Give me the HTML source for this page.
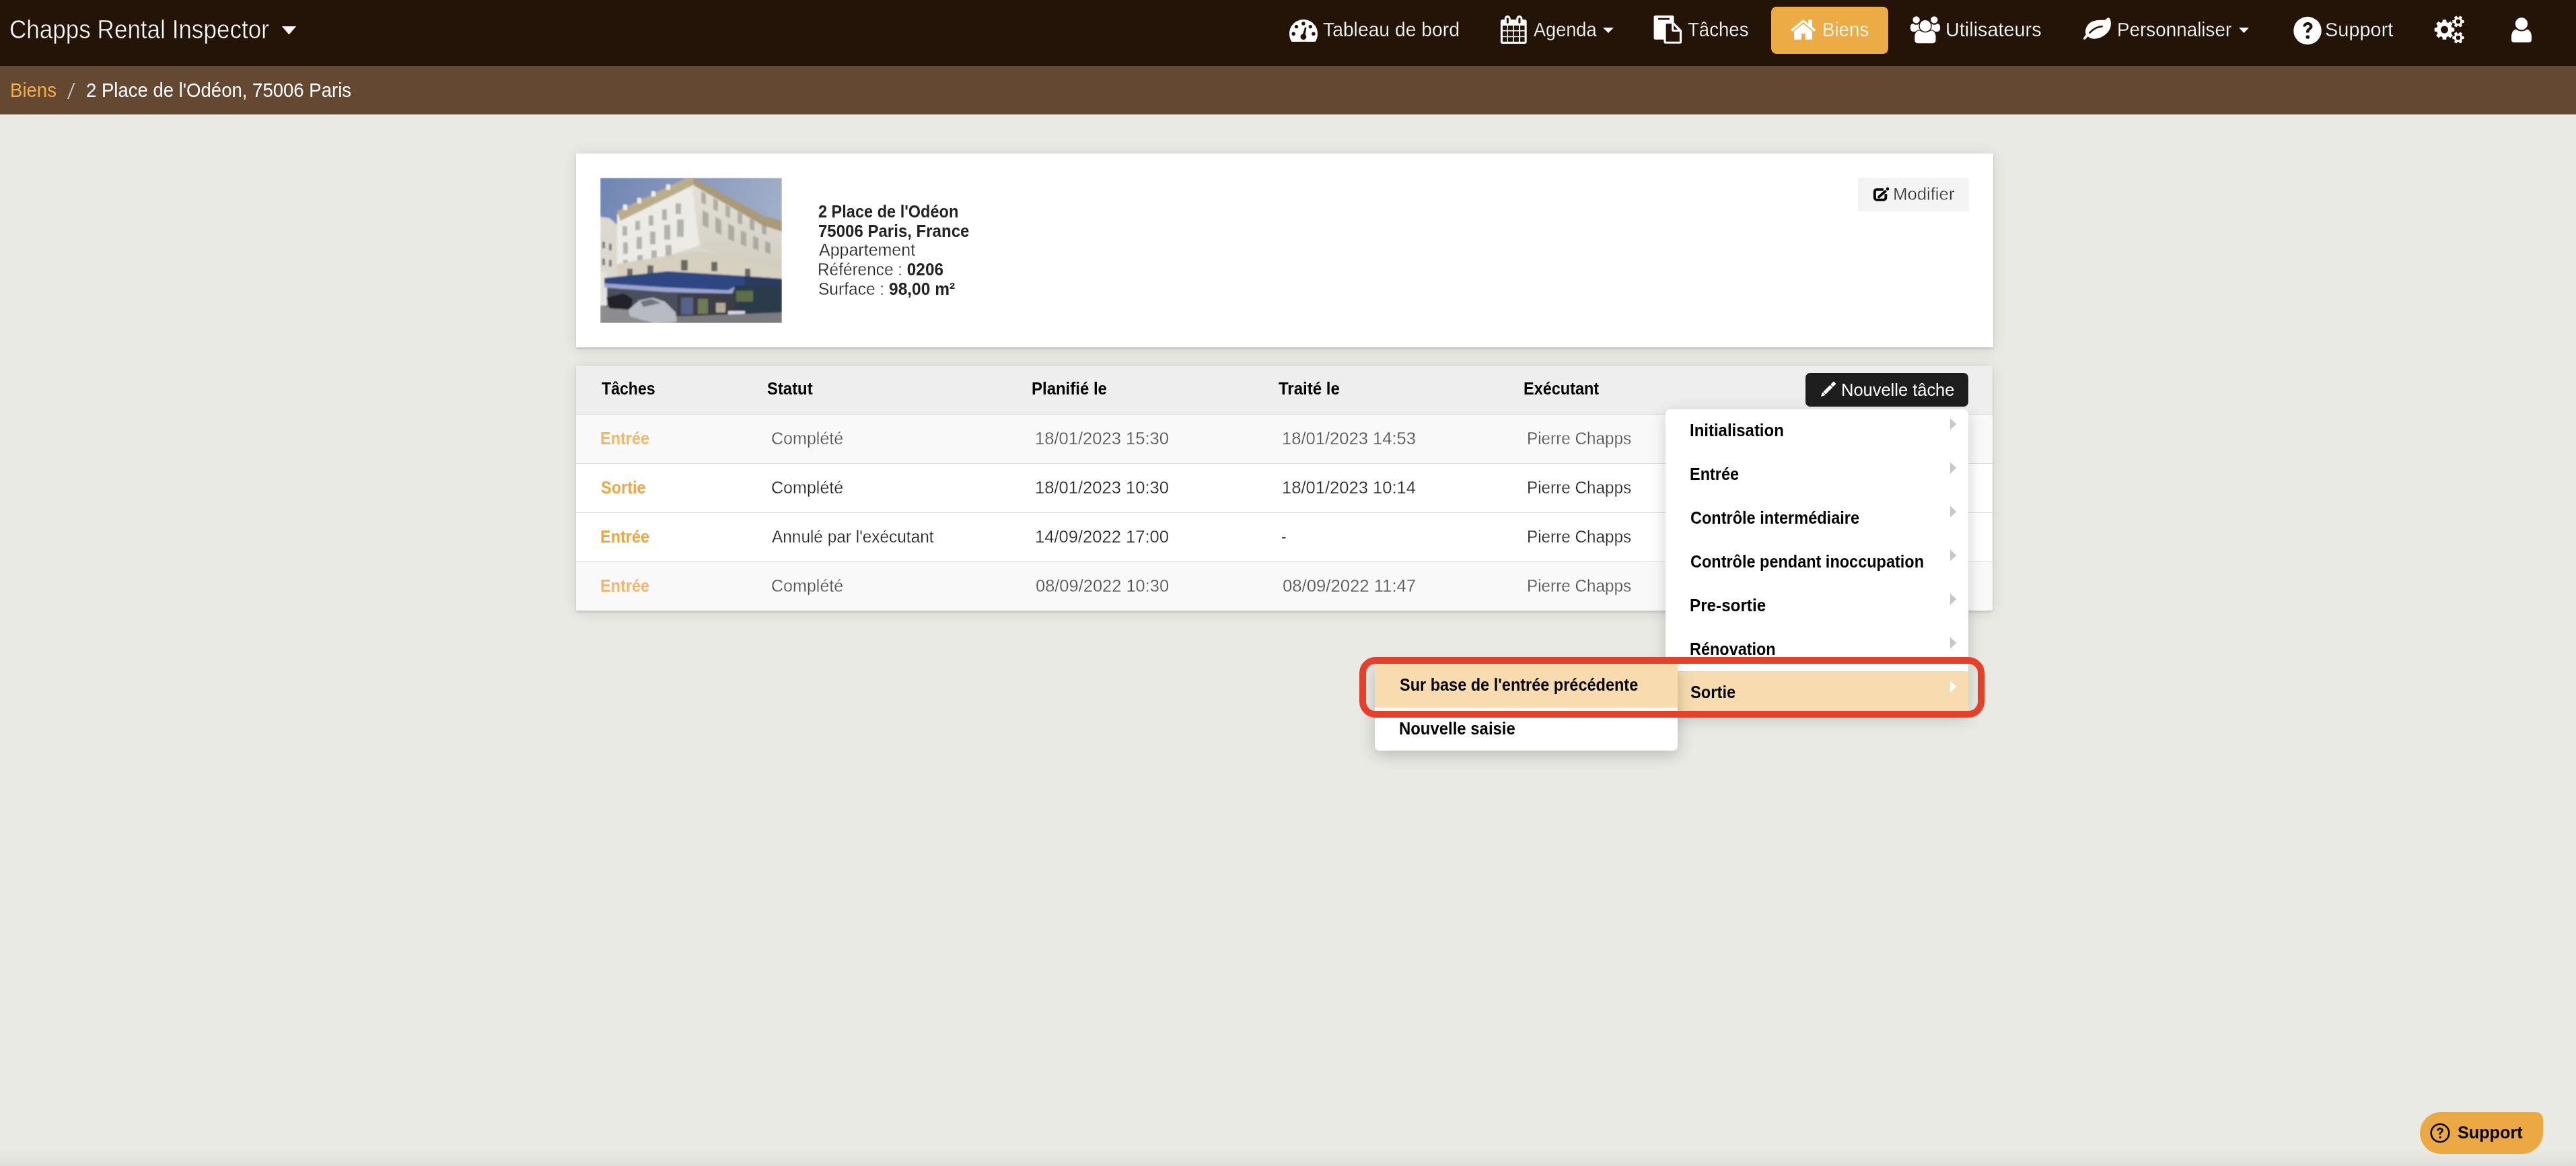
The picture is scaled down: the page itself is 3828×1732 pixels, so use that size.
<!DOCTYPE html>
<html><head><meta charset="utf-8"><style>
html,body{margin:0;padding:0}
body{width:3828px;height:1732px;overflow:hidden;position:relative;background:#eaeae5;font-family:"Liberation Sans",sans-serif}
.t{position:absolute;white-space:nowrap;transform-origin:0 0;font-family:"Liberation Sans",sans-serif}
.t b{-webkit-text-stroke:0}
svg{display:block}
</style></head><body>
<div style="position:absolute;left:0px;top:0px;width:3828px;height:98px;background:#241307"></div>
<div style="position:absolute;left:0px;top:98px;width:3828px;height:72px;background:#654832"></div>
<div style="position:absolute;left:0px;top:1707px;width:3828px;height:25px;background:linear-gradient(rgba(0,0,0,0),rgba(0,0,0,0.05))"></div>
<div style="position:absolute;left:2632px;top:10px;width:174px;height:70px;background:#ecab45;border-radius:8px"></div>
<svg style="position:absolute;left:419px;top:39px;" width="21" height="12" viewBox="0 0 21 12"><path d="M0.3 0.3H20.7L10.5 12Z" fill="#fff" stroke="#fff" stroke-width="0.6" stroke-linejoin="round"/></svg>
<svg style="position:absolute;left:2382px;top:41px;" width="16" height="8" viewBox="0 0 16 8"><path d="M0 0H16L8 8Z" fill="#fff"/></svg>
<svg style="position:absolute;left:3327px;top:41px;" width="15" height="8" viewBox="0 0 15 8"><path d="M0 0H15L7.5 8Z" fill="#fff"/></svg>
<svg style="position:absolute;left:1916px;top:29px;" width="42" height="33" viewBox="0 0 42 33"><path d="M21 0C9.4 0 0 9.4 0 21c0 4 1 8 3 11.5L4 33H38l1-0.5C41 29 42 25 42 21 42 9.4 32.6 0 21 0Z" fill="#fff"/><g fill="#241307"><circle cx="20.9" cy="6" r="2.7"/><circle cx="10.5" cy="10.6" r="2.7"/><circle cx="31.3" cy="10.6" r="2.7"/><circle cx="6.2" cy="21.2" r="2.7"/><circle cx="35.9" cy="21.2" r="2.7"/><circle cx="20.9" cy="25.6" r="4.4"/><path d="M18.8 25L23.2 11.2l2.3 0.7L23 26Z"/></g></svg>
<svg style="position:absolute;left:2229px;top:23px;" width="41" height="43" viewBox="0 0 41 43"><rect x="0.9" y="5.9" width="38.8" height="36.1" rx="3" fill="#fff"/><rect x="6.7" y="0.1" width="9.1" height="12" rx="4.5" fill="#fff"/><rect x="24.3" y="0.1" width="9.1" height="12" rx="4.5" fill="#fff"/><rect x="9.8" y="3.3" width="3.1" height="8.4" rx="1.5" fill="#241307"/><rect x="27.4" y="3.3" width="3.1" height="8.4" rx="1.5" fill="#241307"/><g fill="#241307"><rect x="4" y="15" width="6.7" height="6.8"/><rect x="4" y="23.5" width="6.7" height="7.2"/><rect x="4" y="32.2" width="6.7" height="6.7"/><rect x="12" y="15" width="7.4" height="6.8"/><rect x="12" y="23.5" width="7.4" height="7.2"/><rect x="12" y="32.2" width="7.4" height="6.7"/><rect x="21" y="15" width="7.1" height="6.8"/><rect x="21" y="23.5" width="7.1" height="7.2"/><rect x="21" y="32.2" width="7.1" height="6.7"/><rect x="30.1" y="15" width="6.5" height="6.8"/><rect x="30.1" y="23.5" width="6.5" height="7.2"/><rect x="30.1" y="32.2" width="6.5" height="6.7"/></g></svg>
<svg style="position:absolute;left:2457px;top:23px;" width="43" height="43" viewBox="0 0 43 43"><rect x="0.6" y="0.1" width="29.9" height="35.7" rx="2.5" fill="#fff"/><rect x="6.8" y="3.7" width="17.4" height="2.7" rx="1.3" fill="#241307"/><path d="M15.5 10.4H30.5L42.1 22V39.6a2.2 2.2 0 0 1-2.2 2.2H17.7a2.2 2.2 0 0 1-2.2-2.2Z" fill="#fff"/><path d="M18.6 12.2H27.1V21.5a2.5 2.5 0 0 0 2.5 2.5H38.9V38.7H18.6Z" fill="#241307"/><path d="M30.2 14.6V20.9H36.3Z" fill="#241307"/></svg>
<svg style="position:absolute;left:2660px;top:28px;" width="39" height="32" viewBox="0 0 39 32"><path d="M0.85 16.3L19.7 1 27.1 7V1.2H32.9V11.7L38.4 16.3 36.1 18.9 19.7 5.1 3.5 18.9Z" fill="#fff"/><path d="M19.7 7.2L32.9 18.2V29.8Q32.9 30.8 31.9 30.8H22.7V22.1H16.9V30.8H7.1Q6.1 30.8 6.1 29.8V18.2Z" fill="#fff"/></svg>
<svg style="position:absolute;left:2838px;top:22px;" width="46" height="44" viewBox="0 0 46 44"><path d="M0.9 18C0.9 15 2.5 12.9 5 12.9 7 14.3 8.2 14.8 9.6 14.8 11 14.8 12.5 14.3 14 13H20V25H5.5C2.8 25 0.9 23.3 0.9 20.5Z" fill="#fff"/><path d="M45.1 18C45.1 15 43.5 12.9 41 12.9 39 14.3 37.8 14.8 36.4 14.8 35 14.8 33.5 14.3 32 13H26V25H40.5C43.2 25 45.1 23.3 45.1 20.5Z" fill="#fff"/><circle cx="9.6" cy="7.4" r="5.8" fill="#fff" stroke="#241307" stroke-width="1.2"/><circle cx="36.3" cy="7.4" r="5.8" fill="#fff" stroke="#241307" stroke-width="1.2"/><path d="M15 22.7C17 24.3 20 25.5 23 25.5 26 25.5 29 24.3 31 22.7 36 22.7 39.2 26.5 39.2 31.5V38A5 5 0 0 1 34.2 43H11.7A5 5 0 0 1 6.7 38V31.5C6.7 26.5 10 22.7 15 22.7Z" fill="#fff" stroke="#241307" stroke-width="1.3"/><circle cx="23" cy="16.5" r="9.1" fill="#fff" stroke="#241307" stroke-width="1.4"/></svg>
<svg style="position:absolute;left:3095px;top:26px;" width="43" height="34" viewBox="0 0 43 34"><path d="M37.9 0.2C40.5 0.2 42 4 41.9 9.4 41.8 18 36 27 22 31 14 33 10 30 7.7 28.2L3.8 32.3A1.7 1.7 0 0 1 1.4 29.9L4.8 25.3C3 21 4 15 8.5 10 14 4 22 3.5 32.8 3.7 35 3.2 36 0.2 37.9 0.2Z" fill="#fff"/><path d="M10.4 22.6C14 19 20 13.5 28.6 13.3" stroke="#241307" stroke-width="2.6" fill="none" stroke-linecap="round"/></svg>
<svg style="position:absolute;left:3408px;top:24px;" width="42" height="43" viewBox="0 0 42 43"><circle cx="21" cy="21.5" r="20.7" fill="#fff"/><path d="M14.5 15.5c0-4 3-6.5 7-6.5s7 2.6 7 6.2c0 4.5-5 4.8-5 8.3v1h-4.5v-1.4c0-4.8 5-5 5-7.8 0-1.5-1.1-2.5-2.6-2.5-1.6 0-2.6 1.2-2.6 2.7Z" fill="#241307"/><circle cx="21.3" cy="31" r="2.8" fill="#241307"/></svg>
<svg style="position:absolute;left:3616px;top:23px;" width="48" height="43" viewBox="0 0 48 43"><polygon points="27.55,17.81 31.28,18.42 31.28,23.58 27.55,24.19 26.57,26.56 28.77,29.63 25.13,33.27 22.06,31.07 19.69,32.05 19.08,35.78 13.92,35.78 13.31,32.05 10.94,31.07 7.87,33.27 4.23,29.63 6.43,26.56 5.45,24.19 1.72,23.58 1.72,18.42 5.45,17.81 6.43,15.44 4.23,12.37 7.87,8.73 10.94,10.93 13.31,9.95 13.92,6.22 19.08,6.22 19.69,9.95 22.06,10.93 25.13,8.73 28.77,12.37 26.57,15.44" fill="#fff"/><circle cx="16.5" cy="21" r="5.5" fill="#241307"/><polygon points="42.96,6.66 45.57,6.99 45.57,11.01 42.96,11.34 42.01,12.99 43.02,15.41 39.54,17.42 37.95,15.33 36.05,15.33 34.46,17.42 30.98,15.41 31.99,12.99 31.04,11.34 28.43,11.01 28.43,6.99 31.04,6.66 31.99,5.01 30.98,2.59 34.46,0.58 36.05,2.67 37.95,2.67 39.54,0.58 43.02,2.59 42.01,5.01" fill="#fff"/><circle cx="37" cy="9" r="3.2" fill="#241307"/><polygon points="42.96,30.66 45.57,30.99 45.57,35.01 42.96,35.34 42.01,36.99 43.02,39.41 39.54,41.42 37.95,39.33 36.05,39.33 34.46,41.42 30.98,39.41 31.99,36.99 31.04,35.34 28.43,35.01 28.43,30.99 31.04,30.66 31.99,29.01 30.98,26.59 34.46,24.58 36.05,26.67 37.95,26.67 39.54,24.58 43.02,26.59 42.01,29.01" fill="#fff"/><circle cx="37" cy="33" r="3.2" fill="#241307"/></svg>
<svg style="position:absolute;left:3731px;top:26px;" width="32" height="37" viewBox="0 0 32 37"><circle cx="16" cy="9.2" r="9.2" fill="#fff"/><path d="M8 17.5c2 2 5 3 8 3s6-1 8-3c4.5 1 7 5 7 12v3.5a4 4 0 0 1-4 4H5a4 4 0 0 1-4-4V29.5c0-7 2.5-11 7-12Z" fill="#fff"/></svg>
<svg style="position:absolute;left:100px;top:123px;" width="12" height="24" viewBox="0 0 12 24"><path d="M9.5 0h2L2 24H0Z" fill="#cfcfcf"/></svg>
<div style="position:absolute;left:856px;top:228px;width:2106px;height:288px;background:#fff;box-shadow:0 2px 3px rgba(0,0,0,0.15),0 2px 20px rgba(0,0,0,0.11)"></div>
<div style="position:absolute;left:892px;top:264px;width:270px;height:216px;overflow:hidden"><svg style="position:absolute;left:0px;top:0px;" width="270" height="216" viewBox="0 0 270 216"><filter id="pb" x="0" y="0" width="1" height="1"><feGaussianBlur stdDeviation="0.9" edgeMode="duplicate"/></filter><g filter="url(#pb)"><defs><linearGradient id="sky" x1="0" y1="0" x2="1" y2="0.3"><stop offset="0" stop-color="#6f85b3"/><stop offset="1" stop-color="#a3b0c9"/></linearGradient><linearGradient id="rf" x1="0" y1="0" x2="0" y2="1"><stop offset="0" stop-color="#e6e3da"/><stop offset="1" stop-color="#cfcabd"/></linearGradient></defs><rect width="270" height="216" fill="url(#sky)"/><path d="M25 60L135 10 270 75V160H25Z" fill="#dcd8cc"/><path d="M0 58L14 60 25 70V185H0Z" fill="#dcd8d0"/><g fill="#7d7a72"><rect x="3" y="95" width="4" height="10"/><rect x="13" y="98" width="4" height="10"/><rect x="3" y="120" width="4" height="10"/><rect x="13" y="122" width="4" height="10"/></g><path d="M25 54L135 0 148 100 25 140Z" fill="#ecebe5"/><path d="M135 0L242 58 270 68 270 150 148 104Z" fill="url(#rf)"/><path d="M25 50L133 -2 140 10 30 64Z" fill="#b9ad8c"/><path d="M135 -2L242 56 270 64 270 80 240 70 140 12Z" fill="#a99b7a"/><g fill="#f1efe8"><rect x="34" y="40" width="6" height="8"/><rect x="55" y="30" width="6" height="8"/><rect x="76" y="20" width="6" height="8"/><rect x="98" y="10" width="6" height="8"/></g><g fill="#8e8f88" opacity="0.6"><path d="M33 72h7v14h-7Z M52 64h7v14h-7Z M72 56h7v15h-7Z M92 47h7v16h-7Z M112 38h8v16h-8Z"/><path d="M34 96h7v17h-7Z M54 88h8v18h-8Z M74 80h8v19h-8Z M95 70h9v22h-9Z M114 62h10v26h-10Z"/><path d="M34 122h7v14h-7Z M55 115h8v16h-8Z M76 108h8v17h-8Z M97 100h9v19h-9Z"/><path d="M150 20l7 4v16l-7-3Z M168 30l7 4v16l-7-3Z M186 40l7 4v16l-7-3Z M204 50l7 4v16l-7-3Z M222 60l7 4v15l-7-3Z M240 68l7 3v14l-7-2Z"/><path d="M152 48l9 5v22l-9-4Z M171 58l9 5v22l-9-4Z M190 68l9 5v22l-9-4Z M209 78l8 4v20l-8-3Z M227 86l8 4v18l-8-3Z M245 94l8 3v16l-8-2Z"/></g><path d="M25 128L148 108 270 136V152L148 142 25 152Z" fill="#d6d0c1"/><g fill="#6b6a63"><path d="M40 135h8v12h-8Z M70 130h9v14h-9Z M120 122h10v16h-10Z M165 125h9v14h-9Z M215 135h8v12h-8Z"/></g><path d="M0 150H270V216H0Z" fill="#4a4f5c"/><path d="M0 140L10 140 10 190 0 190Z" fill="#e4e2dc"/><path d="M6 149L100 139 214 146 214 160 190 170 100 166 6 160Z" fill="#2f4683"/><path d="M6 157L100 163 190 167 200 162 196 172 100 170 6 163Z" fill="#9aa5cf"/><path d="M214 146L270 150V160L214 160Z" fill="#2b3a62"/><path d="M115 172H200V205H115Z" fill="#3d3e45"/><path d="M120 178h18v25h-18Z" fill="#55648a"/><path d="M145 180h15v22h-15Z" fill="#6f7a55"/><path d="M172 186h14v14h-14Z" fill="#b7aa95"/><path d="M200 160H270V216H200Z" fill="#2c3a48"/><path d="M202 168h25v16h-25Z" fill="#5f6e4a"/><path d="M190 198h25v12h-25Z" fill="#d8d8e0"/><path d="M0 190L40 196 115 216H0Z" fill="#8d8d8f"/><path d="M112 206L270 200V216H112Z" fill="#7c7c80"/><path d="M9 178L35 172 48 180 46 196 14 194Z" fill="#22242c"/><path d="M42 196L58 182 78 178 96 184 112 200 114 214 80 216 44 206Z" fill="#b8bbc1"/><path d="M60 184L76 180 90 186 64 192Z" fill="#70757e"/></g></svg></div>
<div style="position:absolute;left:2761px;top:264px;width:165px;height:50px;background:#f4f4f4"></div>
<svg style="position:absolute;left:2781px;top:275px;" width="30" height="27" viewBox="0 0 30 27"><path d="M17.8 6.45H8A3.2 3.2 0 0 0 4.85 9.6V18.7A3.2 3.2 0 0 0 8 21.85H18.2A3.2 3.2 0 0 0 21.35 18.7V13.3" fill="none" stroke="#000" stroke-width="3.9"/><path d="M11.2 17.4L20.5 9.3" stroke="#000" stroke-width="3.8" stroke-linecap="round"/><circle cx="24" cy="5.6" r="2.3" fill="#000"/></svg>
<div style="position:absolute;left:856px;top:544px;width:2105px;height:363px;background:#fff;box-shadow:0 2px 3px rgba(0,0,0,0.15),0 2px 20px rgba(0,0,0,0.11)"></div>
<div style="position:absolute;left:856px;top:544px;width:2105px;height:71px;background:#eeeeee;border-bottom:1px solid #dedede"></div>
<div style="position:absolute;left:856px;top:616px;width:2105px;height:72px;background:#f9f9f9;border-bottom:1px solid #dedede"></div>
<div style="position:absolute;left:856px;top:689px;width:2105px;height:72px;background:#fff;border-bottom:1px solid #dedede"></div>
<div style="position:absolute;left:856px;top:762px;width:2105px;height:72px;background:#fff;border-bottom:1px solid #dedede"></div>
<div style="position:absolute;left:856px;top:835px;width:2105px;height:72px;background:#f9f9f9"></div>
<div style="position:absolute;left:2683px;top:554px;width:242px;height:50px;background:#1e1e1e;border-radius:7px"></div>
<svg style="position:absolute;left:2704px;top:566px;" width="25" height="25" viewBox="0 0 25 25"><g transform="translate(12.5 12.5) rotate(-45)" fill="#fff"><path d="M-15 0L-9.6 -2.6H-8.4V2.6H-9.6Z"/><rect x="-7.6" y="-2.6" width="14.6" height="5.2"/><rect x="7.8" y="-2.6" width="6.6" height="5.2" rx="1.2"/></g></svg>
<div style="position:absolute;left:2475px;top:608px;width:450px;height:454px;background:#fff;border-radius:7px;box-shadow:0 6px 24px rgba(0,0,0,0.18);overflow:hidden"></div>
<div style="position:absolute;left:2475px;top:997px;width:450px;height:65px;background:#f8dcb0;border-radius:0 0 7px 7px"></div>
<svg style="position:absolute;left:2898px;top:621px;" width="10" height="18" viewBox="0 0 10 18"><path d="M0 0.5L9.3 9 0 17.5Z" fill="#c8c8c8"/></svg>
<svg style="position:absolute;left:2898px;top:686px;" width="10" height="18" viewBox="0 0 10 18"><path d="M0 0.5L9.3 9 0 17.5Z" fill="#c8c8c8"/></svg>
<svg style="position:absolute;left:2898px;top:751px;" width="10" height="18" viewBox="0 0 10 18"><path d="M0 0.5L9.3 9 0 17.5Z" fill="#c8c8c8"/></svg>
<svg style="position:absolute;left:2898px;top:816px;" width="10" height="18" viewBox="0 0 10 18"><path d="M0 0.5L9.3 9 0 17.5Z" fill="#c8c8c8"/></svg>
<svg style="position:absolute;left:2898px;top:881px;" width="10" height="18" viewBox="0 0 10 18"><path d="M0 0.5L9.3 9 0 17.5Z" fill="#c8c8c8"/></svg>
<svg style="position:absolute;left:2898px;top:946px;" width="10" height="18" viewBox="0 0 10 18"><path d="M0 0.5L9.3 9 0 17.5Z" fill="#c8c8c8"/></svg>
<svg style="position:absolute;left:2898px;top:1011px;" width="10" height="18" viewBox="0 0 10 18"><path d="M0 0.5L9.3 9 0 17.5Z" fill="#fff"/></svg>
<div style="position:absolute;left:2043px;top:986px;width:450px;height:129px;background:#fff;border-radius:7px;box-shadow:0 6px 24px rgba(0,0,0,0.22);overflow:hidden"></div>
<div style="position:absolute;left:2043px;top:986px;width:450px;height:65px;background:#f8dcb0"></div>
<div style="position:absolute;left:3596px;top:1652px;width:183px;height:62px;background:#eca842;border-radius:31px 10px 31px 31px"></div>
<svg style="position:absolute;left:3611px;top:1668px;" width="30" height="30" viewBox="0 0 30 30"><circle cx="15" cy="15" r="13.3" fill="none" stroke="#000" stroke-width="2.6"/><path d="M10.5 11.5c0-2.8 2-4.5 4.6-4.5 2.7 0 4.6 1.7 4.6 4 0 3.2-3.6 3.3-3.6 5.8v0.7h-2.6v-0.9c0-3.3 3.5-3.4 3.5-5.4 0-1-0.8-1.8-1.9-1.8-1.2 0-2 0.9-2 2.1Z" fill="#000"/><circle cx="15.2" cy="21.5" r="1.7" fill="#000"/></svg>
<div class="t" style="left:14.41px;top:25.07px;font-size:38px;line-height:38px;font-weight:400;color:#ffffff;transform:scaleX(0.9225);-webkit-text-stroke:0.6px #241307">Chapps Rental Inspector</div>
<div class="t" style="left:1966.17px;top:28.26px;font-size:30.4px;line-height:30.4px;font-weight:400;color:#ffffff;transform:scaleX(0.9309);-webkit-text-stroke:0.3px #241307">Tableau de bord</div>
<div class="t" style="left:2278.75px;top:28.26px;font-size:30.4px;line-height:30.4px;font-weight:400;color:#ffffff;transform:scaleX(0.8929);-webkit-text-stroke:0.3px #241307">Agenda</div>
<div class="t" style="left:2508.09px;top:28.26px;font-size:30.4px;line-height:30.4px;font-weight:400;color:#ffffff;transform:scaleX(0.9082);-webkit-text-stroke:0.3px #241307">Tâches</div>
<div class="t" style="left:2707.68px;top:28.26px;font-size:30.4px;line-height:30.4px;font-weight:400;color:#ffffff;transform:scaleX(0.9110);-webkit-text-stroke:0.3px #ecab45">Biens</div>
<div class="t" style="left:2891.10px;top:28.26px;font-size:30.4px;line-height:30.4px;font-weight:400;color:#ffffff;transform:scaleX(0.9490);-webkit-text-stroke:0.3px #241307">Utilisateurs</div>
<div class="t" style="left:3145.67px;top:28.26px;font-size:30.4px;line-height:30.4px;font-weight:400;color:#ffffff;transform:scaleX(0.9158);-webkit-text-stroke:0.3px #241307">Personnaliser</div>
<div class="t" style="left:3455.05px;top:28.26px;font-size:30.4px;line-height:30.4px;font-weight:400;color:#ffffff;transform:scaleX(0.9524);-webkit-text-stroke:0.3px #241307">Support</div>
<div class="t" style="left:15.09px;top:118.26px;font-size:30.4px;line-height:30.4px;font-weight:400;color:#f2ad4c;transform:scaleX(0.9068);">Biens</div>
<div class="t" style="left:127.84px;top:118.26px;font-size:30.4px;line-height:30.4px;font-weight:400;color:#ffffff;transform:scaleX(0.9059);">2 Place de l'Odéon, 75006 Paris</div>
<div class="t" style="left:1215.61px;top:300.93px;font-size:26.3px;line-height:26.3px;font-weight:700;color:#222222;transform:scaleX(0.8948);">2 Place de l'Odéon</div>
<div class="t" style="left:1215.59px;top:329.73px;font-size:26.3px;line-height:26.3px;font-weight:700;color:#222222;transform:scaleX(0.9135);">75006 Paris, France</div>
<div class="t" style="left:1216.50px;top:358.33px;font-size:26.3px;line-height:26.3px;font-weight:400;color:#222222;transform:scaleX(0.9503);-webkit-text-stroke:0.3px #ffffff">Appartement</div>
<div class="t" style="left:1214.65px;top:387.13px;font-size:26.3px;line-height:26.3px;font-weight:400;color:#222222;transform:scaleX(0.9271);-webkit-text-stroke:0.3px #ffffff">Référence : <b>0206</b></div>
<div class="t" style="left:1215.57px;top:415.93px;font-size:26.3px;line-height:26.3px;font-weight:400;color:#222222;transform:scaleX(0.9329);-webkit-text-stroke:0.3px #ffffff">Surface : <b>98,00 m²</b></div>
<div class="t" style="left:2813.02px;top:274.78px;font-size:26px;line-height:26px;font-weight:400;color:#333333;transform:scaleX(0.9889);-webkit-text-stroke:0.3px #ffffff">Modifier</div>
<div class="t" style="left:893.75px;top:565.49px;font-size:25.4px;line-height:25.4px;font-weight:700;color:#000000;transform:scaleX(0.9109);">Tâches</div>
<div class="t" style="left:1140.31px;top:565.49px;font-size:25.4px;line-height:25.4px;font-weight:700;color:#000000;transform:scaleX(0.9401);">Statut</div>
<div class="t" style="left:1532.61px;top:565.49px;font-size:25.4px;line-height:25.4px;font-weight:700;color:#000000;transform:scaleX(0.9440);">Planifié le</div>
<div class="t" style="left:1900.25px;top:565.49px;font-size:25.4px;line-height:25.4px;font-weight:700;color:#000000;transform:scaleX(0.9474);">Traité le</div>
<div class="t" style="left:2264.40px;top:565.49px;font-size:25.4px;line-height:25.4px;font-weight:700;color:#000000;transform:scaleX(0.9244);">Exécutant</div>
<div class="t" style="left:2735.54px;top:565.98px;font-size:26px;line-height:26px;font-weight:400;color:#ffffff;transform:scaleX(0.9793);">Nouvelle tâche</div>
<div class="t" style="left:892.46px;top:637.81px;font-size:26.2px;line-height:26.2px;font-weight:700;color:#eeb86e;transform:scaleX(0.8956);">Entrée</div>
<div class="t" style="left:1145.79px;top:637.81px;font-size:26.2px;line-height:26.2px;font-weight:400;color:#4f4f4f;transform:scaleX(0.9568);-webkit-text-stroke:0.3px #f9f9f9">Complété</div>
<div class="t" style="left:1538.30px;top:637.81px;font-size:26.2px;line-height:26.2px;font-weight:400;color:#4f4f4f;transform:scaleX(0.9764);-webkit-text-stroke:0.3px #f9f9f9">18/01/2023 15:30</div>
<div class="t" style="left:1904.55px;top:637.81px;font-size:26.2px;line-height:26.2px;font-weight:400;color:#4f4f4f;transform:scaleX(0.9764);-webkit-text-stroke:0.3px #f9f9f9">18/01/2023 14:53</div>
<div class="t" style="left:2269.15px;top:637.81px;font-size:26.2px;line-height:26.2px;font-weight:400;color:#4f4f4f;transform:scaleX(0.9273);-webkit-text-stroke:0.3px #f9f9f9">Pierre Chapps</div>
<div class="t" style="left:893.35px;top:710.81px;font-size:26.2px;line-height:26.2px;font-weight:700;color:#eca843;transform:scaleX(0.8979);">Sortie</div>
<div class="t" style="left:1145.79px;top:710.81px;font-size:26.2px;line-height:26.2px;font-weight:400;color:#222222;transform:scaleX(0.9568);-webkit-text-stroke:0.3px #ffffff">Complété</div>
<div class="t" style="left:1538.30px;top:710.81px;font-size:26.2px;line-height:26.2px;font-weight:400;color:#222222;transform:scaleX(0.9764);-webkit-text-stroke:0.3px #ffffff">18/01/2023 10:30</div>
<div class="t" style="left:1904.55px;top:710.81px;font-size:26.2px;line-height:26.2px;font-weight:400;color:#222222;transform:scaleX(0.9764);-webkit-text-stroke:0.3px #ffffff">18/01/2023 10:14</div>
<div class="t" style="left:2269.15px;top:710.81px;font-size:26.2px;line-height:26.2px;font-weight:400;color:#222222;transform:scaleX(0.9273);-webkit-text-stroke:0.3px #ffffff">Pierre Chapps</div>
<div class="t" style="left:892.46px;top:783.81px;font-size:26.2px;line-height:26.2px;font-weight:700;color:#eca843;transform:scaleX(0.8956);">Entrée</div>
<div class="t" style="left:1146.75px;top:783.81px;font-size:26.2px;line-height:26.2px;font-weight:400;color:#222222;transform:scaleX(0.9312);-webkit-text-stroke:0.3px #ffffff">Annulé par l'exécutant</div>
<div class="t" style="left:1538.30px;top:783.81px;font-size:26.2px;line-height:26.2px;font-weight:400;color:#222222;transform:scaleX(0.9764);-webkit-text-stroke:0.3px #ffffff">14/09/2022 17:00</div>
<div class="t" style="left:1904.14px;top:783.81px;font-size:26.2px;line-height:26.2px;font-weight:400;color:#222222;transform:scaleX(0.8571);-webkit-text-stroke:0.3px #ffffff">-</div>
<div class="t" style="left:2269.15px;top:783.81px;font-size:26.2px;line-height:26.2px;font-weight:400;color:#222222;transform:scaleX(0.9273);-webkit-text-stroke:0.3px #ffffff">Pierre Chapps</div>
<div class="t" style="left:892.46px;top:856.81px;font-size:26.2px;line-height:26.2px;font-weight:700;color:#eeb86e;transform:scaleX(0.8956);">Entrée</div>
<div class="t" style="left:1145.79px;top:856.81px;font-size:26.2px;line-height:26.2px;font-weight:400;color:#4f4f4f;transform:scaleX(0.9568);-webkit-text-stroke:0.3px #f9f9f9">Complété</div>
<div class="t" style="left:1539.28px;top:856.81px;font-size:26.2px;line-height:26.2px;font-weight:400;color:#4f4f4f;transform:scaleX(0.9715);-webkit-text-stroke:0.3px #f9f9f9">08/09/2022 10:30</div>
<div class="t" style="left:1905.52px;top:856.81px;font-size:26.2px;line-height:26.2px;font-weight:400;color:#4f4f4f;transform:scaleX(0.9812);-webkit-text-stroke:0.3px #f9f9f9">08/09/2022 11:47</div>
<div class="t" style="left:2269.15px;top:856.81px;font-size:26.2px;line-height:26.2px;font-weight:400;color:#4f4f4f;transform:scaleX(0.9273);-webkit-text-stroke:0.3px #f9f9f9">Pierre Chapps</div>
<div class="t" style="left:2510.58px;top:625.64px;font-size:26.4px;line-height:26.4px;font-weight:700;color:#000000;transform:scaleX(0.9080);">Initialisation</div>
<div class="t" style="left:2510.62px;top:690.64px;font-size:26.4px;line-height:26.4px;font-weight:700;color:#000000;transform:scaleX(0.8886);">Entrée</div>
<div class="t" style="left:2511.51px;top:755.64px;font-size:26.4px;line-height:26.4px;font-weight:700;color:#000000;transform:scaleX(0.8914);">Contrôle intermédiaire</div>
<div class="t" style="left:2511.51px;top:820.64px;font-size:26.4px;line-height:26.4px;font-weight:700;color:#000000;transform:scaleX(0.8897);">Contrôle pendant inoccupation</div>
<div class="t" style="left:2510.56px;top:885.64px;font-size:26.4px;line-height:26.4px;font-weight:700;color:#000000;transform:scaleX(0.9183);">Pre-sortie</div>
<div class="t" style="left:2510.62px;top:950.64px;font-size:26.4px;line-height:26.4px;font-weight:700;color:#000000;transform:scaleX(0.8886);">Rénovation</div>
<div class="t" style="left:2511.50px;top:1014.64px;font-size:26.4px;line-height:26.4px;font-weight:700;color:#000000;transform:scaleX(0.8986);">Sortie</div>
<div class="t" style="left:2079.61px;top:1003.64px;font-size:26.4px;line-height:26.4px;font-weight:700;color:#000000;transform:scaleX(0.8902);">Sur base de l'entrée précédente</div>
<div class="t" style="left:2078.69px;top:1068.64px;font-size:26.4px;line-height:26.4px;font-weight:700;color:#000000;transform:scaleX(0.9059);">Nouvelle saisie</div>
<div class="t" style="left:3652.03px;top:1668.98px;font-size:26px;line-height:26px;font-weight:700;color:#000000;transform:scaleX(0.9697);">Support</div>
<div style="position:absolute;left:2020px;top:976px;width:929px;height:90px;border:10px solid #e5402a;border-radius:24px;box-sizing:border-box"></div>
</body></html>
